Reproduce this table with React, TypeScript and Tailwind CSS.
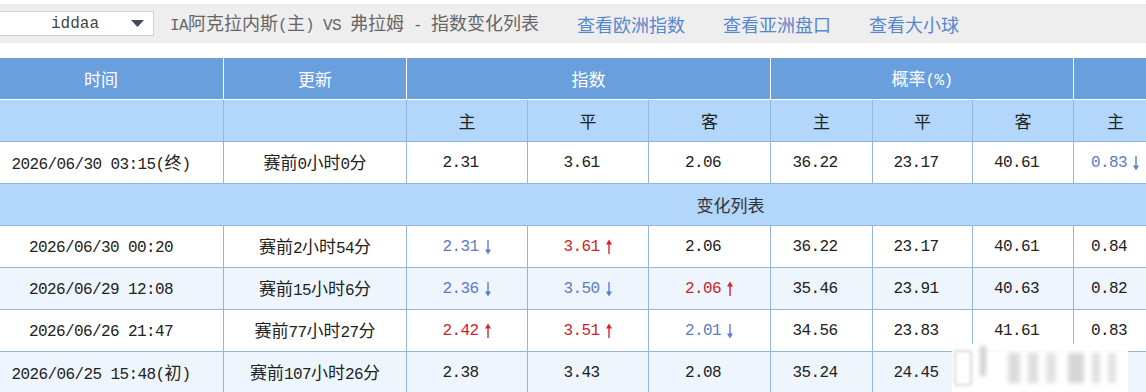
import React from 'react';

const CJK_RUN = /([\u3400-\u9fff\uff00-\uffef]+)/;

// mixes the CJK face with a monospace one for digits, like the SimSun look of the source page
const Mixed = ({ text, cjk = 'text-[17px]' }: { text: string; cjk?: string }) => (
  <>
    {text.split(CJK_RUN).map((part, i) =>
      part === '' ? null : i % 2 === 1 ? (
        <span key={i} className={`font-['Noto_Sans_CJK_SC',sans-serif] ${cjk}`}>{part}</span>
      ) : (
        <span key={i} className="font-['Liberation_Mono',monospace] text-[16px] tracking-[-0.6px] whitespace-pre">{part}</span>
      )
    )}
  </>
);

const Arrow = ({ dir }: { dir: 'up' | 'down' }) => (
  <svg width="8" height="16" viewBox="0 0 8 16" className={dir === 'up' ? 'text-[#d9232d]' : 'text-[#5a7fd0]'}>
    {dir === 'up' ? (
      <>
        <line x1="4" y1="4" x2="4" y2="15" stroke="currentColor" strokeWidth="1.4" />
        <path d="M4 0.5L7 5.5H1Z" fill="currentColor" />
      </>
    ) : (
      <>
        <line x1="4" y1="1" x2="4" y2="12" stroke="currentColor" strokeWidth="1.4" />
        <path d="M4 15.5L7 10.5H1Z" fill="currentColor" />
      </>
    )}
  </svg>
);

type Val = { v: string; d?: 'up' | 'down' };

const Num = ({ val }: { val: Val }) => (
  <div className="flex items-center justify-center">
    <span
      className={`font-['Liberation_Mono',monospace] text-[16px] tracking-[-0.6px] ${
        val.d === 'up' ? 'text-[#c8262e]' : val.d === 'down' ? 'text-[#5d7cc0]' : 'text-[#222]'
      }`}
    >
      {val.v}
    </span>
    <span className="w-[13px] flex justify-end">{val.d && <Arrow dir={val.d} />}</span>
  </div>
);

const rows: { time: string; upd: string; vals: Val[]; alt?: boolean }[] = [
  {
    time: '2026/06/30 00:20',
    upd: '赛前2小时54分',
    vals: [{ v: '2.31', d: 'down' }, { v: '3.61', d: 'up' }, { v: '2.06' }, { v: '36.22' }, { v: '23.17' }, { v: '40.61' }, { v: '0.84' }],
  },
  {
    time: '2026/06/29 12:08',
    upd: '赛前15小时6分',
    vals: [{ v: '2.36', d: 'down' }, { v: '3.50', d: 'down' }, { v: '2.06', d: 'up' }, { v: '35.46' }, { v: '23.91' }, { v: '40.63' }, { v: '0.82' }],
    alt: true,
  },
  {
    time: '2026/06/26 21:47',
    upd: '赛前77小时27分',
    vals: [{ v: '2.42', d: 'up' }, { v: '3.51', d: 'up' }, { v: '2.01', d: 'down' }, { v: '34.56' }, { v: '23.83' }, { v: '41.61' }, { v: '0.83' }],
  },
  {
    time: '2026/06/25 15:48(初)',
    upd: '赛前107小时26分',
    vals: [{ v: '2.38' }, { v: '3.43' }, { v: '2.08' }, { v: '35.24' }, { v: '24.45' }],
    alt: true,
  },
];

const td = 'border border-[#92b6dc] h-[42px] p-0 text-center text-[#222]';
const th = 'border border-white h-[42px] p-0 text-center font-normal';

export default function App() {
  return (
    <div className="relative w-[1146px] h-[392px] overflow-hidden bg-white">
      {/* top bar */}
      <div className="mt-[4px] h-[39px] bg-[#eeeeee] flex items-center">
        <div className="-ml-[22px] w-[176px] h-[25px] bg-white border border-[#cfcfcf] flex items-center">
          <span className="flex-1 text-center pl-[40px] font-['Liberation_Mono',monospace] text-[16px] text-[#444]">iddaa</span>
          <svg width="13" height="7" viewBox="0 0 13 7" className="mr-[9px]">
            <path d="M0 0H13L6.5 7Z" fill="#3d4b5c" />
          </svg>
        </div>
        <div className="ml-[16px] text-[#666] leading-none">
          <Mixed text="IA阿克拉内斯(主) VS 弗拉姆 - 指数变化列表" cjk="text-[18px]" />
        </div>
        <div className="ml-[38px] flex gap-[38px] text-[#5787cc] font-['Noto_Sans_CJK_SC',sans-serif] text-[18px] leading-none">
          <span>查看欧洲指数</span>
          <span>查看亚洲盘口</span>
          <span>查看大小球</span>
        </div>
      </div>

      {/* table, scrolled a little to the right like the source page */}
      <table className="mt-[14px] -ml-[22px] w-[1504px] table-fixed border-collapse">
        <colgroup>
          <col className="w-[245px]" />
          <col className="w-[183px]" />
          <col className="w-[121px]" />
          <col className="w-[121px]" />
          <col className="w-[122px]" />
          <col className="w-[102px]" />
          <col className="w-[100px]" />
          <col className="w-[101px]" />
          <col className="w-[84px]" />
          <col className="w-[84px]" />
          <col className="w-[84px]" />
          <col className="w-[157px]" />
        </colgroup>
        <thead>
          <tr className="bg-[#6a9fde] text-white">
            <th className={th}><Mixed text="时间" /></th>
            <th className={th}><Mixed text="更新" /></th>
            <th className={th} colSpan={3}><Mixed text="指数" /></th>
            <th className={th} colSpan={3}><Mixed text="概率(%)" /></th>
            <th className={th} colSpan={3} />
            <th className={th} />
          </tr>
          <tr className="bg-[#b3d6fb] text-[#333]">
            <td className={td} />
            <td className={td} />
            {['主', '平', '客', '主', '平', '客', '主'].map((t, i) => (
              <td key={i} className={td}><Mixed text={t} /></td>
            ))}
            <td className={td} />
            <td className={td} />
            <td className={td} />
          </tr>
        </thead>
        <tbody>
          <tr className="bg-white">
            <td className={td}><Mixed text="2026/06/30 03:15(终)" /></td>
            <td className={td}><Mixed text="赛前0小时0分" /></td>
            {[{ v: '2.31' }, { v: '3.61' }, { v: '2.06' }, { v: '36.22' }, { v: '23.17' }, { v: '40.61' }, { v: '0.83', d: 'down' as const }].map((val, i) => (
              <td key={i} className={td}><Num val={val} /></td>
            ))}
            <td className={td} />
            <td className={td} />
            <td className={td} />
          </tr>
          <tr className="bg-[#b3d6fb]">
            <td className={`${td} text-[#333]`} colSpan={12}><Mixed text="变化列表" /></td>
          </tr>
          {rows.map((r, ri) => (
            <tr key={ri} className={r.alt ? 'bg-[#eef5fc]' : 'bg-white'}>
              <td className={td}><Mixed text={r.time} /></td>
              <td className={td}><Mixed text={r.upd} /></td>
              {Array.from({ length: 10 }).map((_, i) => (
                <td key={i} className={td}>{r.vals[i] && <Num val={r.vals[i]} />}</td>
              ))}
            </tr>
          ))}
        </tbody>
      </table>

      {/* blurred watermark over the bottom-right corner */}
      <div className="absolute left-[952px] top-[344px] w-[176px] h-[48px] bg-white/95 flex items-center gap-[8px] px-[2px]">
        <div className="w-[18px] h-[36px] border-2 border-[#d8d8d8] rounded-sm blur-[1.5px]" />
        <div className="w-[6px] h-[30px] bg-[#cfcfcf] blur-[2px] -mt-[14px]" />
        <div className="ml-[14px] w-[12px] h-[30px] bg-[#dcdcdc] blur-[2px]" />
        <div className="w-[10px] h-[30px] bg-[#dedede] blur-[2px]" />
        <div className="w-[10px] h-[30px] bg-[#e2e2e2] blur-[2px]" />
        <div className="ml-[4px] w-[16px] h-[30px] bg-[#d6d6d6] blur-[2px]" />
        <div className="w-[8px] h-[30px] bg-[#e0e0e0] blur-[2px]" />
        <div className="w-[8px] h-[30px] bg-[#e4e4e4] blur-[2px]" />
      </div>
    </div>
  );
}
